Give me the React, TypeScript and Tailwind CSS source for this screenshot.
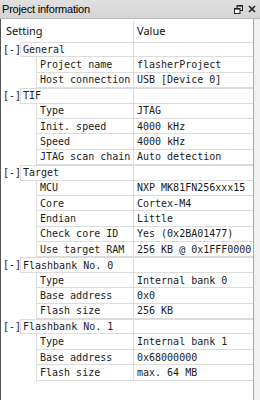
import React from "react";

type Row = { g?: string; k?: string; v?: string };

const rows: Row[] = [
  { g: "General" },
  { k: "Project name", v: "flasherProject" },
  { k: "Host connection", v: "USB [Device 0]" },
  { g: "TIF" },
  { k: "Type", v: "JTAG" },
  { k: "Init. speed", v: "4000 kHz" },
  { k: "Speed", v: "4000 kHz" },
  { k: "JTAG scan chain", v: "Auto detection" },
  { g: "Target" },
  { k: "MCU", v: "NXP MK81FN256xxx15" },
  { k: "Core", v: "Cortex-M4" },
  { k: "Endian", v: "Little" },
  { k: "Check core ID", v: "Yes (0x2BA01477)" },
  { k: "Use target RAM", v: "256 KB @ 0x1FFF0000" },
  { g: "Flashbank No. 0" },
  { k: "Type", v: "Internal bank 0" },
  { k: "Base address", v: "0x0" },
  { k: "Flash size", v: "256 KB" },
  { g: "Flashbank No. 1" },
  { k: "Type", v: "Internal bank 1" },
  { k: "Base address", v: "0x68000000" },
  { k: "Flash size", v: "max. 64 MB" },
];

const mono = { fontFamily: '"DejaVu Sans Mono", monospace' };

export default function App() {
  return (
    <div className="w-[260px] h-[400px] flex flex-col bg-[#f0f0f0] overflow-hidden" style={{ fontFamily: '"Noto Sans", sans-serif' }}>
      <div className="h-[19px] shrink-0 flex items-center justify-between bg-gradient-to-b from-[#e0e0e0] to-[#d4d4d4] border-b border-[#b8b8b8] pl-[2px] pr-[4px]">
        <span className="text-[11px] tracking-[-0.2px] text-black leading-none" style={{ fontFamily: '"Liberation Sans", sans-serif' }}>Project information</span>
        <div className="flex items-center gap-[5px]">
          <svg width="9" height="9" viewBox="0 0 9 9">
            <rect x="3" y="0.5" width="5.5" height="5" fill="none" stroke="#222" />
            <rect x="3" y="0" width="6" height="1.6" fill="#222" />
            <rect x="0.5" y="3.5" width="5.5" height="5" fill="#fff" stroke="#222" />
            <rect x="0" y="3" width="6" height="1.6" fill="#222" />
          </svg>
          <svg width="8" height="8" viewBox="0 0 8 8">
            <path d="M1 1 L7 7 M7 1 L1 7" stroke="#222" strokeWidth="1.6" />
          </svg>
        </div>
      </div>
      <div className="flex-1 flex">
        <div className="w-[254px] bg-white border-l border-[#555] border-r border-r-[#a8a8a8] flex flex-col">
          <div className="h-[23px] flex shrink-0 pt-[2px]">
            <div className="w-[132px] flex items-center pl-[5px] text-[11px] text-[#111]">Setting</div>
            <div className="flex-1 flex items-center pl-[3px] text-[11px] text-[#111] border-l border-[#dcdcdc]">Value</div>
          </div>
          {rows.map((r, i) =>
            r.g ? (
              <div key={i} className="h-[15.4px] flex shrink-0 text-[10px] text-[#1a1a1a]" style={mono}>
                <div className="w-[19px] flex items-center pl-[2px] border-b border-white">[-]</div>
                <div className="w-[113px] flex items-center pl-[2px] border-l border-t border-b border-[#dcdcdc]">{r.g}</div>
                <div className="flex-1 border-l border-t border-b border-[#dcdcdc]"></div>
              </div>
            ) : (
              <div key={i} className="h-[15.4px] flex shrink-0 text-[10px] text-[#1a1a1a]" style={mono}>
                <div className="w-[35px]"></div>
                <div className="w-[97px] flex items-center pl-[3px] border-l border-b border-[#dcdcdc] whitespace-nowrap overflow-hidden">{r.k}</div>
                <div className="flex-1 flex items-center pl-[3px] border-l border-b border-[#dcdcdc] whitespace-nowrap overflow-hidden">{r.v}</div>
              </div>
            )
          )}
        </div>
        <div className="flex-1 bg-[#f0f0f0]"></div>
      </div>
    </div>
  );
}
